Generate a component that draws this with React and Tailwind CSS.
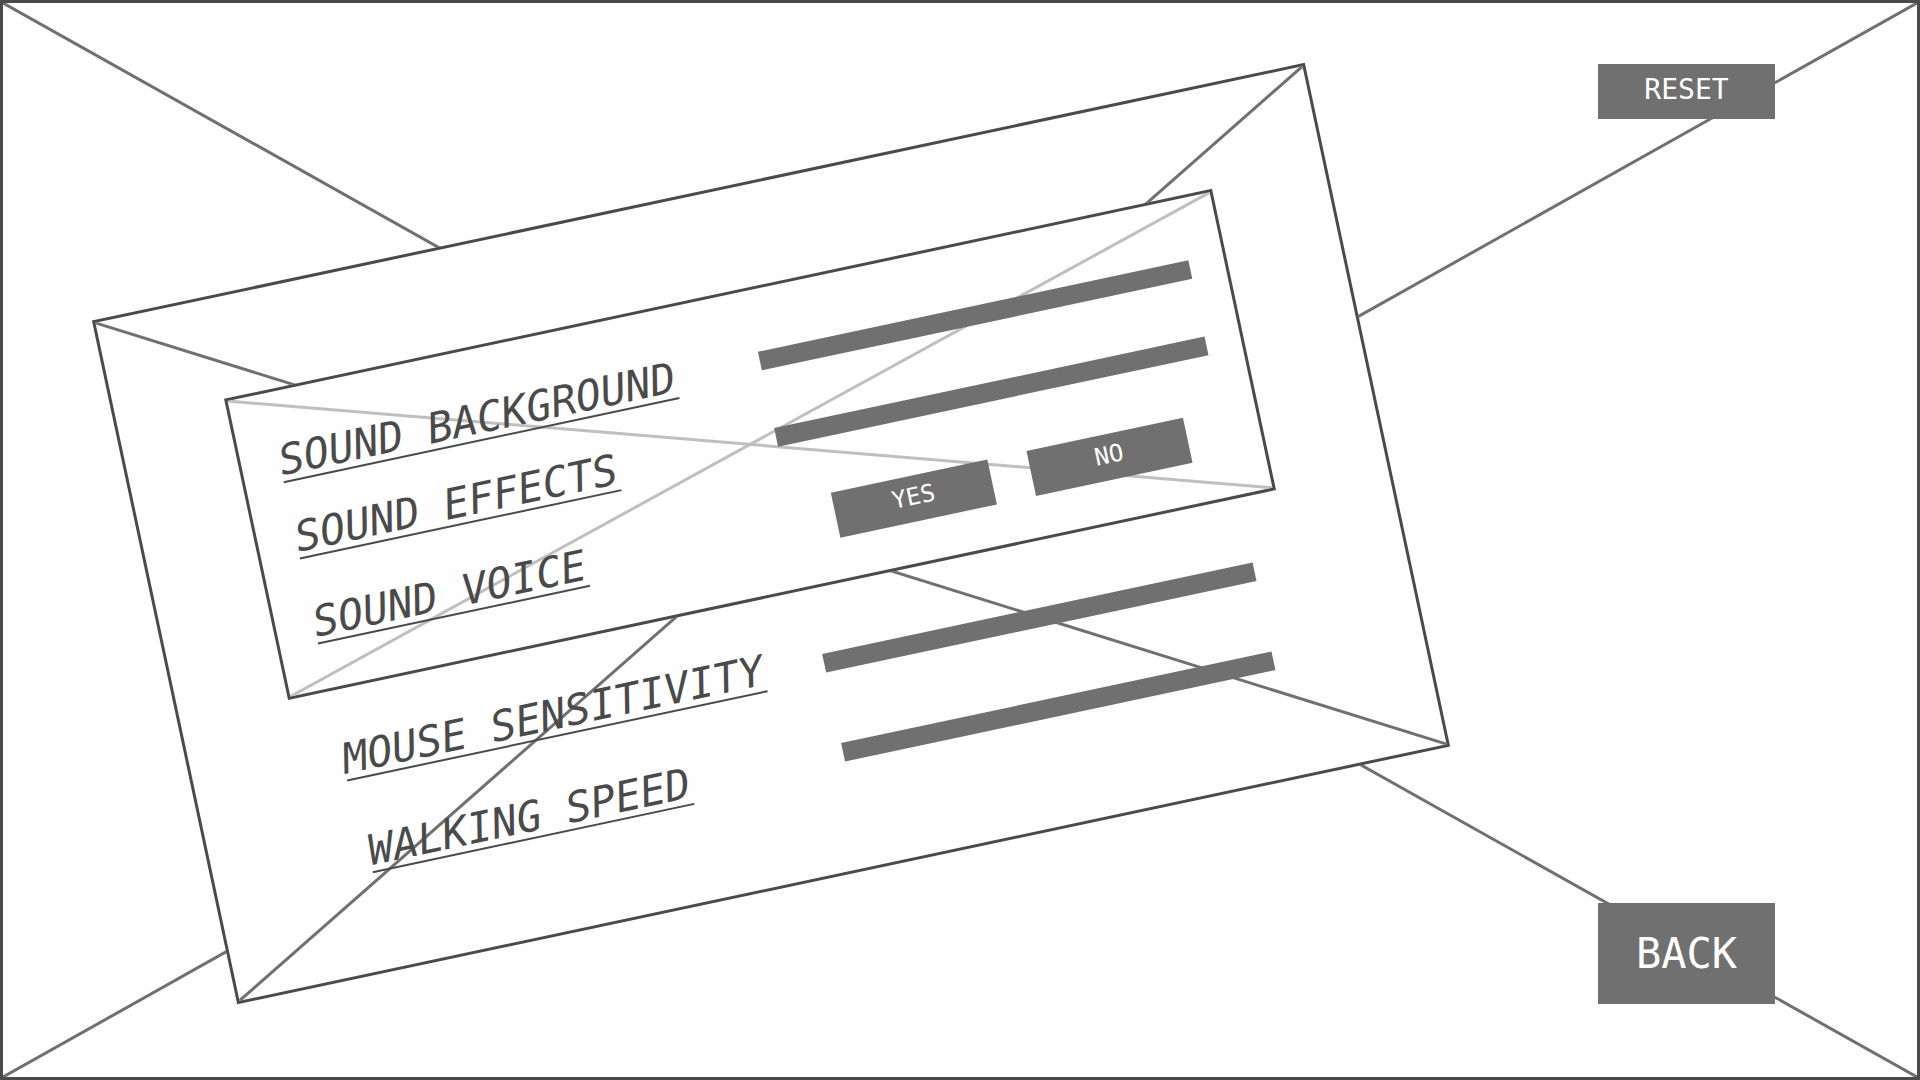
import { useState } from "react";

const MONO = "font-['DejaVu_Sans_Mono','Liberation_Mono',monospace]";

function Cross({ className }) {
  return (
    <svg aria-hidden="true" className={`pointer-events-none absolute inset-0 h-full w-full ${className}`}>
      <line x1="0" y1="0" x2="100%" y2="100%" stroke="currentColor" />
      <line x1="0" y1="100%" x2="100%" y2="0" stroke="currentColor" />
    </svg>
  );
}

const LABEL =
  "text-[42px] leading-[56px] whitespace-nowrap italic underline decoration-2 underline-offset-[6px]";

const ROW = "grid grid-cols-[491px_1fr] items-start";

function SliderRow({ id, label, labelClass = "", sliderClass = "mt-5" }) {
  const [value, setValue] = useState(50);
  return (
    <div className={ROW}>
      <label htmlFor={id} className={`${LABEL} ${labelClass}`}>
        {label}
      </label>
      <input
        id={id}
        type="range"
        value={value}
        onChange={(e) => setValue(Number(e.target.value))}
        className={`block h-[19px] w-full cursor-pointer appearance-none bg-[#707070] [&::-webkit-slider-thumb]:h-[19px] [&::-webkit-slider-thumb]:w-2 [&::-webkit-slider-thumb]:appearance-none [&::-webkit-slider-thumb]:bg-transparent ${sliderClass}`}
      />
    </div>
  );
}

function ChoiceButton({ children, pressed, onClick }) {
  return (
    <button
      type="button"
      aria-pressed={pressed}
      onClick={onClick}
      className="h-[46px] w-40 cursor-pointer bg-[#707070] pb-1 text-2xl text-white"
    >
      {children}
    </button>
  );
}

export default function App() {
  const [voice, setVoice] = useState(true);
  return (
    <main
      className={`relative flex min-h-screen gap-[207px] overflow-hidden border-3 border-[#4a4a4a] bg-[#fefefe] pr-[142px] pl-[148px] text-[#4a4a4a] ${MONO}`}
    >
      <Cross className="stroke-3 text-[#707070]" />

      <form className="relative mt-[181px] min-w-0 flex-1 -rotate-12 self-start border-3 border-[#4a4a4a] bg-[#fefefe] pt-[101px] pr-[114px] pb-[91px] pl-[110px]">
        <Cross className="stroke-3 text-[#707070]" />

        <section
          aria-label="Sound"
          className="relative border-3 border-[#4a4a4a] bg-[#fefefe] pt-[42px] pr-[35px] pb-[39px] pl-[38px]"
        >
          <Cross className="stroke-3 text-[#bfbfbf]" />
          <div className="relative">
            <SliderRow id="sound-background" label="SOUND BACKGROUND" />
            <div className="mt-[22px]">
              <SliderRow id="sound-effects" label="SOUND EFFECTS" />
            </div>
            <div className={`mt-[31px] ${ROW}`} role="group" aria-labelledby="sound-voice">
              <span id="sound-voice" className={LABEL}>
                SOUND VOICE
              </span>
              <div className="flex gap-10 pt-2 pl-[42px]">
                <ChoiceButton pressed={voice} onClick={() => setVoice(true)}>
                  YES
                </ChoiceButton>
                <ChoiceButton pressed={!voice} onClick={() => setVoice(false)}>
                  NO
                </ChoiceButton>
              </div>
            </div>
          </div>
        </section>

        <section aria-label="Movement" className="relative pt-[42px] pr-[38px] pl-[41px]">
          <SliderRow id="mouse-sensitivity" label="MOUSE SENSITIVITY" sliderClass="mt-6" />
          <div className="mt-[39px]">
            <SliderRow id="walking-speed" label="WALKING SPEED" labelClass="pl-1.5" />
          </div>
        </section>
      </form>

      <aside className="relative flex w-[177px] shrink-0 flex-col justify-between pt-[61px] pb-[73px]">
        <button type="reset" className="h-[55px] cursor-pointer bg-[#707070] pb-1 text-[28px] text-white">
          RESET
        </button>
        <button type="button" className="h-[101px] cursor-pointer bg-[#707070] text-[42px] text-white">
          BACK
        </button>
      </aside>
    </main>
  );
}
